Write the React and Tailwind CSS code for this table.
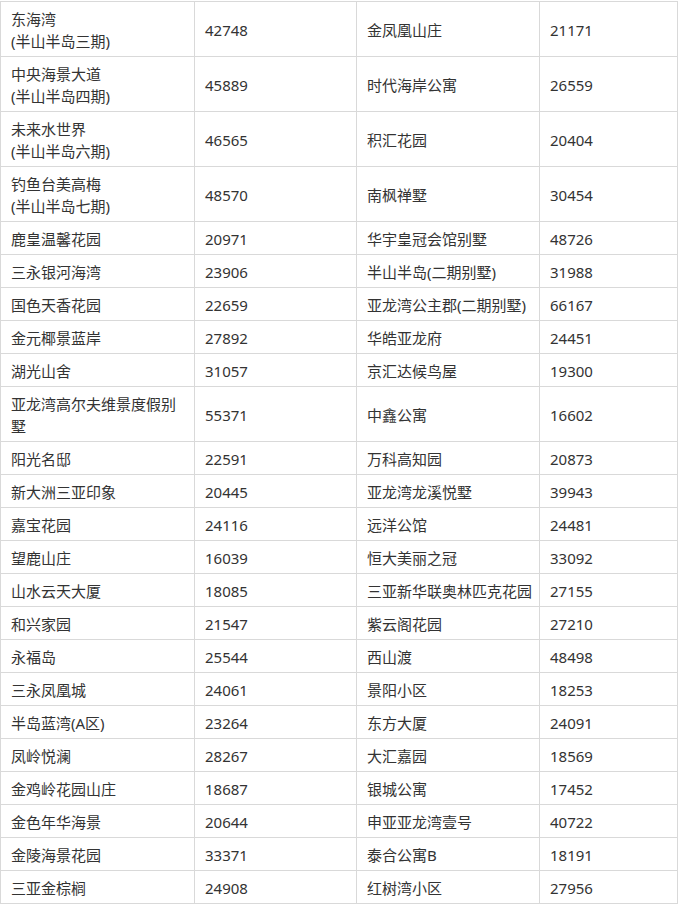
import React from "react";

const rows = [
  [["东海湾", "(半山半岛三期)"], "42748", "金凤凰山庄", "21171"],
  [["中央海景大道", "(半山半岛四期)"], "45889", "时代海岸公寓", "26559"],
  [["未来水世界", "(半山半岛六期)"], "46565", "积汇花园", "20404"],
  [["钓鱼台美高梅", "(半山半岛七期)"], "48570", "南枫禅墅", "30454"],
  [["鹿皇温馨花园"], "20971", "华宇皇冠会馆别墅", "48726"],
  [["三永银河海湾"], "23906", "半山半岛(二期别墅)", "31988"],
  [["国色天香花园"], "22659", "亚龙湾公主郡(二期别墅)", "66167"],
  [["金元椰景蓝岸"], "27892", "华皓亚龙府", "24451"],
  [["湖光山舍"], "31057", "京汇达候鸟屋", "19300"],
  [["亚龙湾高尔夫维景度假别", "墅"], "55371", "中鑫公寓", "16602"],
  [["阳光名邸"], "22591", "万科高知园", "20873"],
  [["新大洲三亚印象"], "20445", "亚龙湾龙溪悦墅", "39943"],
  [["嘉宝花园"], "24116", "远洋公馆", "24481"],
  [["望鹿山庄"], "16039", "恒大美丽之冠", "33092"],
  [["山水云天大厦"], "18085", "三亚新华联奥林匹克花园", "27155"],
  [["和兴家园"], "21547", "紫云阁花园", "27210"],
  [["永福岛"], "25544", "西山渡", "48498"],
  [["三永凤凰城"], "24061", "景阳小区", "18253"],
  [["半岛蓝湾(A区)"], "23264", "东方大厦", "24091"],
  [["凤岭悦澜"], "28267", "大汇嘉园", "18569"],
  [["金鸡岭花园山庄"], "18687", "银城公寓", "17452"],
  [["金色年华海景"], "20644", "申亚亚龙湾壹号", "40722"],
  [["金陵海景花园"], "33371", "泰合公寓B", "18191"],
  [["三亚金棕榈"], "24908", "红树湾小区", "27956"],
];

const td =
  "border border-[#d9d9d9] pl-[10px] pr-[4px] pt-[6px] pb-[4px] align-middle whitespace-nowrap";

export default function App() {
  return (
    <div
      className="bg-white w-[679px] h-[904px] overflow-hidden pt-px text-[15px] leading-[22px] text-[#333333]"
      style={{ fontFamily: '"Noto Sans", "Noto Sans CJK SC", sans-serif' }}
    >
      <table className="table-fixed border-collapse w-[677px]">
        <colgroup>
          <col className="w-[194px]" />
          <col className="w-[162px]" />
          <col className="w-[183px]" />
          <col className="w-[138px]" />
        </colgroup>
        <tbody>
          {rows.map((r, i) => (
            <tr key={i}>
              <td className={td}>
                {r[0].map((l, j) => (
                  <div key={j}>{l}</div>
                ))}
              </td>
              <td className={td}>{r[1]}</td>
              <td className={td}>{r[2]}</td>
              <td className={td}>{r[3]}</td>
            </tr>
          ))}
        </tbody>
      </table>
    </div>
  );
}
